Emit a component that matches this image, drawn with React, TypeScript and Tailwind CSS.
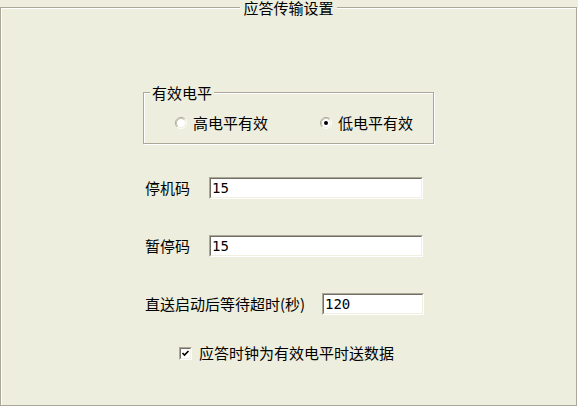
import React from "react";

function Radio({ checked }: { checked?: boolean }) {
  return (
    <svg width="12" height="12" viewBox="0 0 12 12" className="shrink-0">
      <circle cx="6" cy="6" r="4.5" fill="#fff" />
      <path d="M2.11 9.89 A5.5 5.5 0 0 1 9.89 2.11" fill="none" stroke="#ACA899" strokeWidth="1" />
      <path d="M9.89 2.11 A5.5 5.5 0 0 1 2.11 9.89" fill="none" stroke="#fff" strokeWidth="1" />
      <path d="M2.82 9.18 A4.5 4.5 0 0 1 9.18 2.82" fill="none" stroke="#C8C5B5" strokeWidth="1" />
      <path d="M9.18 2.82 A4.5 4.5 0 0 1 2.82 9.18" fill="none" stroke="#F1EFE2" strokeWidth="1" />
      {checked && <circle cx="6" cy="6" r="2" fill="#000" />}
    </svg>
  );
}

function Checkbox() {
  return (
    <div className="w-[13px] h-[13px] shrink-0 border-t border-l border-[#ACA899] border-b-white border-r-white border-b border-r">
      <div className="w-full h-full border-t border-l border-[#716F64] border-b border-r border-b-[#F1EFE2] border-r-[#F1EFE2] bg-white flex items-center justify-center">
        <svg width="9" height="9" viewBox="0 0 9 9">
          <path d="M1.5 4 L3.5 6 L7.5 2" fill="none" stroke="#000" strokeWidth="1.6" />
        </svg>
      </div>
    </div>
  );
}

function Field({ value, width }: { value: string; width: string }) {
  return (
    <div className={`${width} h-[22px] border-t border-l border-[#ACA899] border-b border-r border-b-white border-r-white`}>
      <div className="w-full h-full border-t border-l border-[#716F64] border-b border-r border-b-[#F1EFE2] border-r-[#F1EFE2] bg-white flex items-center pl-[1px] font-['DejaVu_Sans_Mono',monospace] text-[14px] leading-none">
        {value}
      </div>
    </div>
  );
}

export default function App() {
  return (
    <div className="w-[578px] h-[407px] bg-[#EDEEDD] text-black font-['Noto_Sans_CJK_SC','Noto_Sans_CJK_JP',sans-serif] text-[15px] leading-[16px]">
      <fieldset className="w-[577px] h-[406px] border border-[#ACA899] shadow-[inset_1px_1px_0_#fff,1px_1px_0_#fff]">
        <legend className="mx-auto px-[3px] leading-[15px] bg-[#EDEEDD]">应答传输设置</legend>
        <div className="flex flex-col">
          <fieldset className="mt-[70px] ml-[142px] w-[291px] h-[59px] border border-[#ACA899] shadow-[inset_1px_1px_0_#fff,1px_1px_0_#fff]">
            <legend className="ml-[6px] px-[2px] leading-[15px] bg-[#EDEEDD]">有效电平</legend>
            <div className="mt-[15px] h-[16px] flex items-center">
              <div className="ml-[31px]"><Radio /></div>
              <span className="ml-[6px]">高电平有效</span>
              <div className="ml-[52px]"><Radio checked /></div>
              <span className="ml-[6px]">低电平有效</span>
            </div>
          </fieldset>

          <div className="mt-[33px] ml-[144px] flex items-center">
            <span className="w-[64px]">停机码</span>
            <Field value="15" width="w-[214px]" />
          </div>

          <div className="mt-[36px] ml-[144px] flex items-center">
            <span className="w-[64px]">暂停码</span>
            <Field value="15" width="w-[214px]" />
          </div>

          <div className="mt-[36px] ml-[144px] flex items-center">
            <span className="w-[177px]">直送启动后等待超时(秒)</span>
            <Field value="120" width="w-[102px]" />
          </div>

          <div className="mt-[30px] ml-[178px] h-[16px] flex items-center">
            <Checkbox />
            <span className="ml-[7px]">应答时钟为有效电平时送数据</span>
          </div>
        </div>
      </fieldset>
    </div>
  );
}
